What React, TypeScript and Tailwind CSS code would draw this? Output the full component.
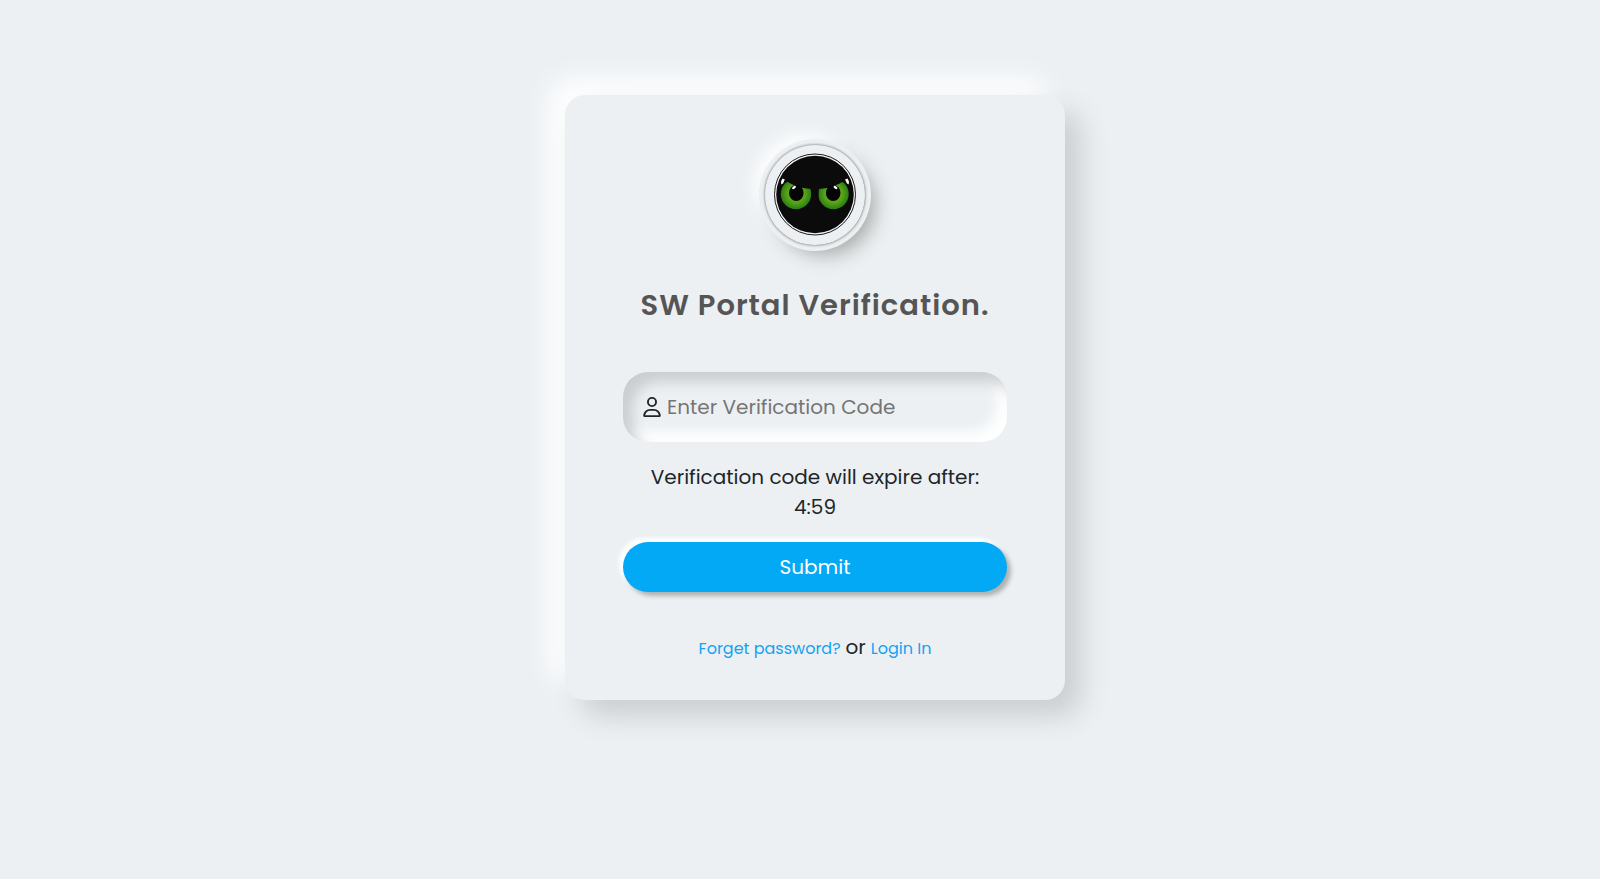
import React, { useState } from 'react';
import { FaRegUser } from 'react-icons/fa6';

const EyesLogo: React.FC = () => (
  <svg viewBox="0 0 150 150" className="h-full w-full" role="img" aria-label="SW Portal">
    <defs>
      <radialGradient id="iris">
        <stop offset="0.4" stopColor="#6aae12" />
        <stop offset="0.65" stopColor="#4f9f16" />
        <stop offset="1" stopColor="#2d7d16" />
      </radialGradient>
      <clipPath id="brows">
        <path d="M36 59 L44.500 60 Q57 68.500 71.500 69 L71.500 95 L36 95 Z" />
        <path d="M114 59 L105.500 60 Q93 68.500 78.500 69 L78.500 95 L114 95 Z" />
      </clipPath>
    </defs>
    <circle cx="75" cy="74.500" r="40.500" fill="#f4f4f4" stroke="#1c1c1c" strokeWidth="1" />
    <circle cx="75" cy="74.500" r="38.800" fill="#0b0b0b" />
    <g clipPath="url(#brows)">
      <circle cx="56" cy="74" r="15.200" fill="url(#iris)" />
      <circle cx="93.500" cy="74" r="15.200" fill="url(#iris)" />
    </g>
    <ellipse cx="56.300" cy="73" rx="7.300" ry="8" fill="#050505" />
    <ellipse cx="93.200" cy="73" rx="7.300" ry="8" fill="#050505" />
    <ellipse cx="54" cy="67.500" rx="2.200" ry="1.200" fill="#ffffff" transform="rotate(-35 54 67.500)" />
    <ellipse cx="95.500" cy="67.500" rx="2.200" ry="1.200" fill="#ffffff" transform="rotate(35 95.500 67.500)" />
    <path d="M41 61.500 L42.500 58.500 L44.800 59.500 L43 63.500 L41.300 64.500 Z" fill="#ffffff" />
    <path d="M109 61.500 L107.500 58.500 L105 59.500 L107 63.500 L108.700 64.500 Z" fill="#ffffff" />
  </svg>
);

const App: React.FC = () => {
  const [code, setCode] = useState('');

  return (
    <div className="min-h-screen bg-[#ecf0f3] py-[95px] pl-[30px] font-[Poppins,Inter,sans-serif] text-xl leading-[30px] text-[#212529]">
      <main className="mx-auto flex w-full max-w-[500px] flex-col items-center rounded-[20px] bg-[#ecf0f3] px-[58px] pt-[50px] pb-[38px] shadow-[16px_16px_28px_#cbced1,-16px_-16px_28px_#ffffff]">
        <div className="h-[100px] w-[100px] rounded-full shadow-[0_0_3px_#5f5f5f,0_0_0_6px_#ecf0f3,10px_10px_19px_#a7aaa7,-10px_-10px_19px_#ffffff]">
          <div className="-m-[25px] h-[150px] w-[150px]">
            <EyesLogo />
          </div>
        </div>

        <h1 className="mt-10 text-[29px] leading-10 font-semibold tracking-[1px] whitespace-nowrap text-[#555555]">
          SW Portal Verification.
        </h1>

        <form className="mt-[47px] w-full" onSubmit={(e) => e.preventDefault()}>
          <div className="flex h-[70px] items-center gap-1.5 rounded-[25px] px-5 shadow-[inset_10px_10px_13px_#cbced1,inset_-10px_-10px_13px_#ffffff]">
            <FaRegUser className="h-5 w-[18px] shrink-0" aria-hidden="true" />
            <input
              type="text"
              name="code"
              aria-label="Verification code"
              placeholder="Enter Verification Code"
              value={code}
              onChange={(e) => setCode(e.target.value)}
              className="w-full bg-transparent outline-none placeholder:text-[#757575]"
            />
          </div>

          <div className="mt-5 text-center">
            <p className="whitespace-nowrap">Verification code will expire after:</p>
            <p>4:59</p>
          </div>

          <button
            type="submit"
            className="mt-5 h-[50px] w-full rounded-[25px] bg-[#03a9f4] text-white shadow-[4px_4px_4px_#b1b1b1,-4px_-4px_4px_#ffffff]"
          >
            Submit
          </button>
        </form>

        <div className="mt-10 flex items-baseline gap-[5px]">
          <a href="#" className="text-base text-[#14a3f2]">Forget password?</a>
          <span>or</span>
          <a href="#" className="text-base text-[#14a3f2]">Login In</a>
        </div>
      </main>
    </div>
  );
};

export default App;
